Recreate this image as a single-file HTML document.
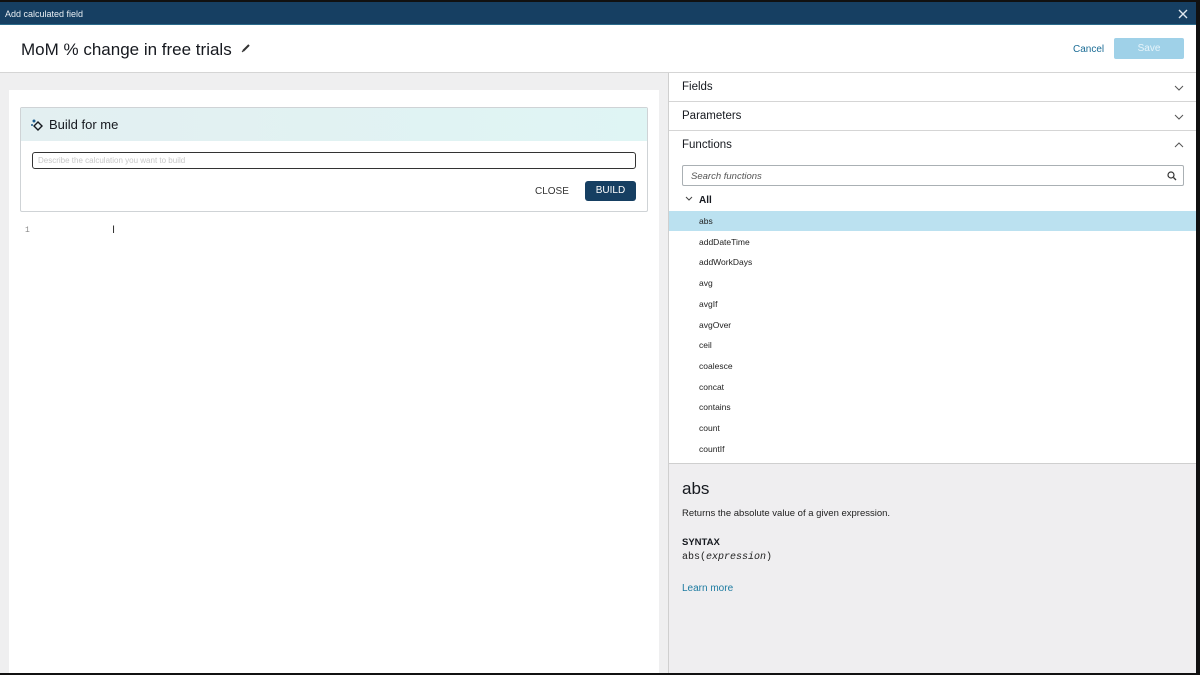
<!DOCTYPE html>
<html><head><style>
*{box-sizing:border-box;margin:0;padding:0}
body{width:1200px;height:675px;overflow:hidden;background:#111;font-family:"Liberation Sans",sans-serif;position:relative}
.abs{position:absolute}
.t{color:#16191f}
</style></head><body>
<div class="abs" style="left:0;top:2px;width:1196px;height:671px;background:#fff"></div>
<div class="abs" style="left:0;top:2px;width:1196px;height:23px;background:#163f62;border-bottom:1px solid #2b6a8a"></div>
<div class="abs" style="left:5px;top:9px;font-size:9px;color:#e8eef3">Add calculated field</div>
<svg class="abs" style="left:1178px;top:9px" width="10" height="10"><path d="M1 1L9 9M9 1L1 9" stroke="#dfe7ee" stroke-width="1.4"/></svg>
<div class="abs t" style="left:21px;top:40px;font-size:17px">MoM % change in free trials</div>
<svg class="abs" style="left:241px;top:43px" width="10" height="10"><path d="M2 8L8 2" stroke="#333" stroke-width="2"/><path d="M1 9L2 8" stroke="#333" stroke-width="1"/></svg>
<div class="abs" style="left:1073px;top:44px;font-size:10px;color:#1c6d96">Cancel</div>
<div class="abs" style="left:1114px;top:38px;width:70px;height:21px;background:#9fd1e8;border-radius:2px;color:#e6f4fa;font-size:10px;text-align:center;line-height:21px">Save</div>
<div class="abs" style="left:0;top:72px;width:1196px;height:1px;background:#d5d5d5"></div>
<div class="abs" style="left:0;top:73px;width:668px;height:600px;background:#efeff0"></div>
<div class="abs" style="left:9px;top:90px;width:650px;height:583px;background:#fff"></div>
<div class="abs" style="left:20px;top:107px;width:628px;height:105px;border:1px solid #cfd3d6;border-radius:2px;background:#fff"></div>
<div class="abs" style="left:21px;top:108px;width:626px;height:33px;background:linear-gradient(90deg,#e3eff1,#dff5f4)"></div>
<svg class="abs" style="left:30px;top:117px" width="16" height="16"><path d="M8 5L12 9L8 13L4 9Z" fill="none" stroke="#16191f" stroke-width="1.4"/><circle cx="4" cy="4" r="1.5" fill="#1c5a8a"/><circle cx="2" cy="8" r="1" fill="#1c5a8a"/></svg>
<div class="abs t" style="left:49px;top:117px;font-size:13px">Build for me</div>
<div class="abs" style="left:32px;top:152px;width:604px;height:17px;border:1.5px solid #333;border-radius:3px;font-size:8px;color:#c8c8c8;padding:3px 5px">Describe the calculation you want to build</div>
<div class="abs" style="left:535px;top:186px;font-size:10px;color:#333">CLOSE</div>
<div class="abs" style="left:585px;top:181px;width:51px;height:20px;background:#163f62;border-radius:3px;color:#fff;font-size:10px;text-align:center;line-height:20px">BUILD</div>
<div class="abs" style="left:25px;top:226px;font-size:8px;color:#888;font-family:'Liberation Mono',monospace">1</div>
<div class="abs" style="left:112px;top:224px;font-size:11px;color:#333">I</div>
<div class="abs" style="left:668px;top:73px;width:1px;height:600px;background:#cfcfcf"></div>
<div class="abs t" style="left:682px;top:81px;font-size:11.5px">Fields</div>
<div class="abs" style="left:669px;top:101px;width:527px;height:1px;background:#d5d5d5"></div>
<div class="abs t" style="left:682px;top:110px;font-size:11.5px">Parameters</div>
<div class="abs" style="left:669px;top:130px;width:527px;height:1px;background:#d5d5d5"></div>
<div class="abs t" style="left:682px;top:139px;font-size:11.5px">Functions</div>
<svg class="abs" style="left:1174px;top:84px" width="10" height="70"><path d="M1 2L5 6L9 2M1 31L5 35L9 31M1 63L5 59L9 63" fill="none" stroke="#555" stroke-width="1"/></svg>
<div class="abs" style="left:682px;top:165px;width:502px;height:21px;border:1px solid #aab0b4;border-radius:2px;font-size:9.5px;font-style:italic;color:#555;padding:5px 8px 0">Search functions</div>
<svg class="abs" style="left:1167px;top:171px" width="10" height="10"><circle cx="4" cy="4" r="3" fill="none" stroke="#333" stroke-width="1.2"/><path d="M6.5 6.5L9 9" stroke="#333" stroke-width="1.3"/></svg>
<svg class="abs" style="left:685px;top:196px" width="8" height="6"><path d="M1 1L4 4L7 1" fill="none" stroke="#444"/></svg>
<div class="abs t" style="left:699px;top:195px;font-size:10px;font-weight:bold">All</div>
<div class="abs" style="left:669px;top:211px;width:527px;height:20px;background:#bbe1f0"></div>
<div class="abs t" style="left:699px;top:211px;font-size:8.5px;line-height:20.7px;color:#222">abs<br>addDateTime<br>addWorkDays<br>avg<br>avgIf<br>avgOver<br>ceil<br>coalesce<br>concat<br>contains<br>count<br>countIf</div>
<div class="abs" style="left:669px;top:463px;width:527px;height:210px;background:#efeef0;border-top:1px solid #cfcfcf"></div>
<div class="abs t" style="left:682px;top:479px;font-size:17px">abs</div>
<div class="abs" style="left:682px;top:508px;font-size:9.5px;color:#222">Returns the absolute value of a given expression.</div>
<div class="abs t" style="left:682px;top:537px;font-size:9.5px;font-weight:bold">SYNTAX</div>
<div class="abs" style="left:682px;top:552px;font-size:10px;color:#222;font-family:'Liberation Mono',monospace">abs(<i>expression</i>)</div>
<div class="abs" style="left:682px;top:583px;font-size:10px;color:#1c7aa0">Learn more</div>
</body></html>
